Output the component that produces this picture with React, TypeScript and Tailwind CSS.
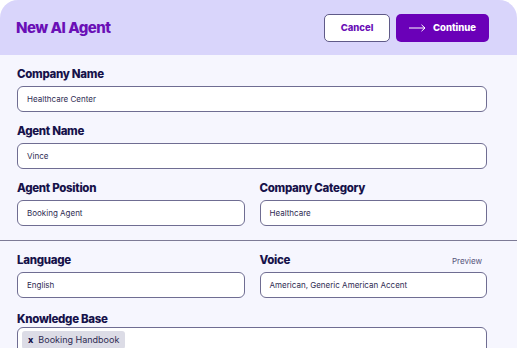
import React from "react";

function Field({ label, value, extra }: { label: string; value: string; extra?: React.ReactNode }) {
  return (
    <div className="flex flex-col">
      <div className="flex items-center justify-between h-[14px]">
        <span className="text-[11.5px] font-extrabold tracking-[-0.3px] text-[#16124a]">{label}</span>
        {extra}
      </div>
      <div className="mt-[4px] h-[26px] rounded-[6px] border border-[#6f6d92] bg-white flex items-center px-[9px]">
        <span className="text-[8px] text-[#2e2b52]">{value}</span>
      </div>
    </div>
  );
}

export default function App() {
  return (
    <div className="w-[517px] h-[348px] overflow-hidden bg-white" style={{ fontFamily: "Inter, 'Noto Sans', sans-serif" }}>
      <div className="rounded-t-[18px] overflow-hidden bg-[#f6f6fe] h-full">
        {/* Header */}
        <div className="h-[55px] bg-[#d9d5fb] flex items-center justify-between pl-[16px] pr-[28px] pt-[1px]">
          <h1 className="text-[15px] font-extrabold tracking-[-0.5px] text-[#6a0fb6]">New AI Agent</h1>
          <div className="flex items-center gap-[6px]">
            <button className="w-[66px] h-[28px] rounded-[5px] border border-[#5f5a88] bg-white text-[9.5px] font-extrabold text-[#6a0fb6]">
              Cancel
            </button>
            <button className="w-[93px] h-[28px] rounded-[5px] bg-[#6a00b8] flex items-center justify-center gap-[7px] text-[9.5px] font-extrabold text-white">
              <svg width="17" height="8" viewBox="0 0 17 8" fill="none" stroke="white" strokeWidth="1">
                <path d="M0 4h16M12.5 0.8L16 4l-3.5 3.2" />
              </svg>
              Continue
            </button>
          </div>
        </div>

        {/* Body */}
        <div className="pt-[13px]">
          <div className="pl-[17px] pr-[30px] flex flex-col gap-[13px]">
            <Field label="Company Name" value="Healthcare Center" />
            <Field label="Agent Name" value="Vince" />
            <div className="grid grid-cols-2 gap-[15px]">
              <Field label="Agent Position" value="Booking Agent" />
              <Field label="Company Category" value="Healthcare" />
            </div>
          </div>

          <div className="mt-[14px] h-px bg-[#7d7b96]" />

          <div className="pl-[17px] pr-[30px] pt-[13px] flex flex-col gap-[15px]">
            <div className="grid grid-cols-2 gap-[15px]">
              <Field label="Language" value="English" />
              <Field
                label="Voice"
                value="American, Generic American Accent"
                extra={<span className="text-[8px] text-[#55537a] pr-[5px]">Preview</span>}
              />
            </div>
            <div className="flex flex-col">
              <div className="h-[14px] flex items-center">
                <span className="text-[11.5px] font-extrabold tracking-[-0.3px] text-[#16124a]">Knowledge Base</span>
              </div>
              <div className="h-[40px] rounded-[6px] border border-[#6f6d92] bg-white flex items-start px-[4px] pt-[3px]">
                <div className="flex items-center gap-[5px] h-[18px] px-[6px] rounded-[3px] bg-[#dcdce6] text-[9px] text-[#2e2b52]">
                  <span className="font-extrabold text-[#16124a]">x</span>
                  <span>Booking Handbook</span>
                </div>
              </div>
            </div>
          </div>
        </div>
      </div>
    </div>
  );
}
